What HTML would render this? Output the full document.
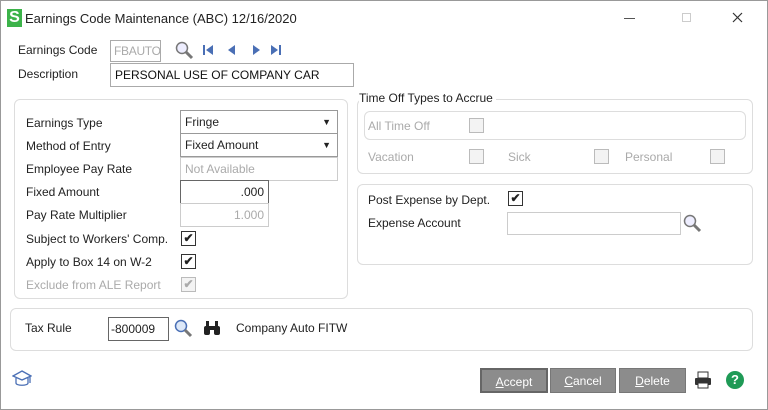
<!DOCTYPE html>
<html><head><style>
*{box-sizing:border-box;margin:0;padding:0}
body{width:768px;height:410px;background:#fff;font-family:"Liberation Sans",sans-serif;font-size:12px;color:#222;position:relative;overflow:hidden}
.a{position:absolute}
.lb{position:absolute;font-size:12px;line-height:14px}
.in{position:absolute;border:1px solid #aaa;background:#fff;font-size:12px;line-height:20px;padding:0 4px;white-space:nowrap;overflow:hidden}
.pn{position:absolute;border:1px solid #ddd;border-radius:6px}
.cb{position:absolute;width:15px;height:15px;border:1px solid #333;background:#fff;font-size:12px;line-height:13px;text-align:center;font-weight:bold}
.cbd{border-color:#bbb;background:#f3f3f3;color:#aaa}
.g{color:#aaa}
.btn{position:absolute;top:368px;height:25px;background:#8c8c8c;color:#fff;font-size:12px;line-height:25px;text-align:center;border:1px solid #777}
.btn u{text-decoration:underline}
</style></head><body>
<div class="a" style="left:0;top:0;width:768px;height:410px;border:1px solid #999"></div>
<div class="a" style="left:7px;top:9px;width:15px;height:18px;background:#3cb34a;color:#fff;font-weight:bold;font-size:16px;line-height:18px;text-align:center">S</div>
<div class="lb" style="left:25px;top:11px;font-size:13px;line-height:16px">Earnings Code Maintenance (ABC) 12/16/2020</div>
<div class="a" style="left:624px;top:18px;width:11px;height:1px;background:#555"></div>
<div class="a" style="left:682px;top:13px;width:9px;height:9px;border:1px solid #ccc"></div>
<svg class="a" style="left:732px;top:12px" width="11" height="11" stroke="#333" stroke-width="1.2"><line x1="1" y1="1" x2="10" y2="10"/><line x1="10" y1="1" x2="1" y2="10"/></svg>

<div class="lb" style="left:18px;top:43px">Earnings Code</div>
<div class="in g" style="left:110px;top:40px;width:51px;height:22px;padding:0 3px;letter-spacing:-0.3px">FBAUTO</div>
<svg class="a" style="left:174px;top:40px" width="20" height="20"><circle cx="8" cy="8" r="5.5" fill="#eef" stroke="#777" stroke-width="1.5"/><line x1="12" y1="12" x2="18" y2="18" stroke="#777" stroke-width="3"/></svg>
<svg class="a" style="left:201px;top:43px" width="90" height="14" fill="#4a6fb5"><rect x="2" y="2" width="2" height="10"/><polygon points="12,2 5,7 12,12"/><polygon points="34,2 27,7 34,12"/><polygon points="52,2 59,7 52,12"/><polygon points="70,2 77,7 70,12"/><rect x="78" y="2" width="2" height="10"/></svg>
<div class="lb" style="left:18px;top:67px">Description</div>
<div class="in" style="left:110px;top:63px;width:244px;height:24px;line-height:22px;color:#111">PERSONAL USE OF COMPANY CAR</div>

<div class="pn" style="left:14px;top:99px;width:334px;height:200px"></div>
<div class="lb" style="left:26px;top:116px">Earnings Type</div>
<div class="in" style="left:180px;top:110px;width:158px;height:24px;border-color:#999;line-height:22px">Fringe<span class="a" style="right:6px;top:0;font-size:9px">▼</span></div>
<div class="lb" style="left:26px;top:139px">Method of Entry</div>
<div class="in" style="left:180px;top:133px;width:158px;height:24px;border-color:#999;line-height:22px">Fixed Amount<span class="a" style="right:6px;top:0;font-size:9px">▼</span></div>
<div class="lb" style="left:26px;top:162px">Employee Pay Rate</div>
<div class="in g" style="left:180px;top:157px;width:158px;height:24px;border-color:#ccc;line-height:22px">Not Available</div>
<div class="lb" style="left:26px;top:185px">Fixed Amount</div>
<div class="in" style="left:180px;top:180px;width:89px;height:24px;border-color:#666;text-align:right;line-height:22px">.000</div>
<div class="lb" style="left:26px;top:208px">Pay Rate Multiplier</div>
<div class="in g" style="left:180px;top:203px;width:89px;height:24px;border-color:#ccc;text-align:right;line-height:22px">1.000</div>
<div class="lb" style="left:26px;top:232px">Subject to Workers' Comp.</div>
<div class="cb" style="left:181px;top:231px">✔</div>
<div class="lb" style="left:26px;top:255px">Apply to Box 14 on W-2</div>
<div class="cb" style="left:181px;top:254px">✔</div>
<div class="lb g" style="left:26px;top:278px">Exclude from ALE Report</div>
<div class="cb cbd" style="left:181px;top:277px">✔</div>

<div class="pn" style="left:357px;top:99px;width:396px;height:75px"></div>
<div class="lb" style="left:359px;top:91px;background:#fff;padding-right:3px">Time Off Types to Accrue</div>
<div class="pn" style="left:364px;top:111px;width:382px;height:29px"></div>
<div class="lb g" style="left:368px;top:119px">All Time Off</div>
<div class="cb cbd" style="left:469px;top:118px"></div>
<div class="lb g" style="left:368px;top:150px">Vacation</div>
<div class="cb cbd" style="left:469px;top:149px"></div>
<div class="lb g" style="left:508px;top:150px">Sick</div>
<div class="cb cbd" style="left:594px;top:149px"></div>
<div class="lb g" style="left:625px;top:150px">Personal</div>
<div class="cb cbd" style="left:710px;top:149px"></div>

<div class="pn" style="left:357px;top:184px;width:396px;height:81px"></div>
<div class="lb" style="left:368px;top:193px">Post Expense by Dept.</div>
<div class="cb" style="left:508px;top:191px">✔</div>
<div class="lb" style="left:368px;top:216px">Expense Account</div>
<div class="in" style="left:507px;top:212px;width:174px;height:23px;border-color:#ccc"></div>
<svg class="a" style="left:682px;top:213px" width="20" height="20"><circle cx="8" cy="8" r="5.5" fill="#eef" stroke="#777" stroke-width="1.5"/><line x1="12" y1="12" x2="18" y2="18" stroke="#777" stroke-width="3"/></svg>

<div class="pn" style="left:10px;top:308px;width:743px;height:43px"></div>
<div class="lb" style="left:25px;top:321px">Tax Rule</div>
<div class="in" style="left:108px;top:317px;width:61px;height:24px;border-color:#666;line-height:22px;padding:0 2px">-800009</div>
<svg class="a" style="left:173px;top:318px" width="20" height="20"><circle cx="8" cy="8" r="5.5" fill="#dde8f8" stroke="#4a6fb5" stroke-width="1.5"/><line x1="12" y1="12" x2="18" y2="18" stroke="#777" stroke-width="3"/></svg>
<svg class="a" style="left:203px;top:320px" width="18" height="16" fill="#222"><rect x="1" y="6" width="6" height="9" rx="2"/><rect x="11" y="6" width="6" height="9" rx="2"/><rect x="3" y="1" width="3" height="6"/><rect x="12" y="1" width="3" height="6"/><rect x="6" y="6" width="6" height="4"/></svg>
<div class="lb" style="left:236px;top:321px">Company Auto FITW</div>

<svg class="a" style="left:12px;top:369px" width="20" height="20" fill="none" stroke="#4a6fb5" stroke-width="1.3"><polygon points="10,2 19,7 10,11 1,7"/><path d="M4 9 v5 c0 3 12 3 12 0 v-5"/><line x1="18" y1="7" x2="18" y2="14"/></svg>
<div class="btn" style="left:480px;width:68px;border:2px solid #666"><u>A</u>ccept</div>
<div class="btn" style="left:550px;width:66px"><u>C</u>ancel</div>
<div class="btn" style="left:619px;width:67px"><u>D</u>elete</div>
<svg class="a" style="left:693px;top:370px" width="20" height="20"><rect x="5" y="2" width="10" height="6" fill="#fff" stroke="#333"/><rect x="2" y="8" width="16" height="7" rx="1" fill="#333"/><rect x="5" y="13" width="10" height="5" fill="#fff" stroke="#333"/></svg>
<div class="a" style="left:726px;top:371px;width:18px;height:18px;border-radius:50%;background:#1f9a56;color:#fff;font-weight:bold;font-size:13px;line-height:18px;text-align:center">?</div>
</body></html>
